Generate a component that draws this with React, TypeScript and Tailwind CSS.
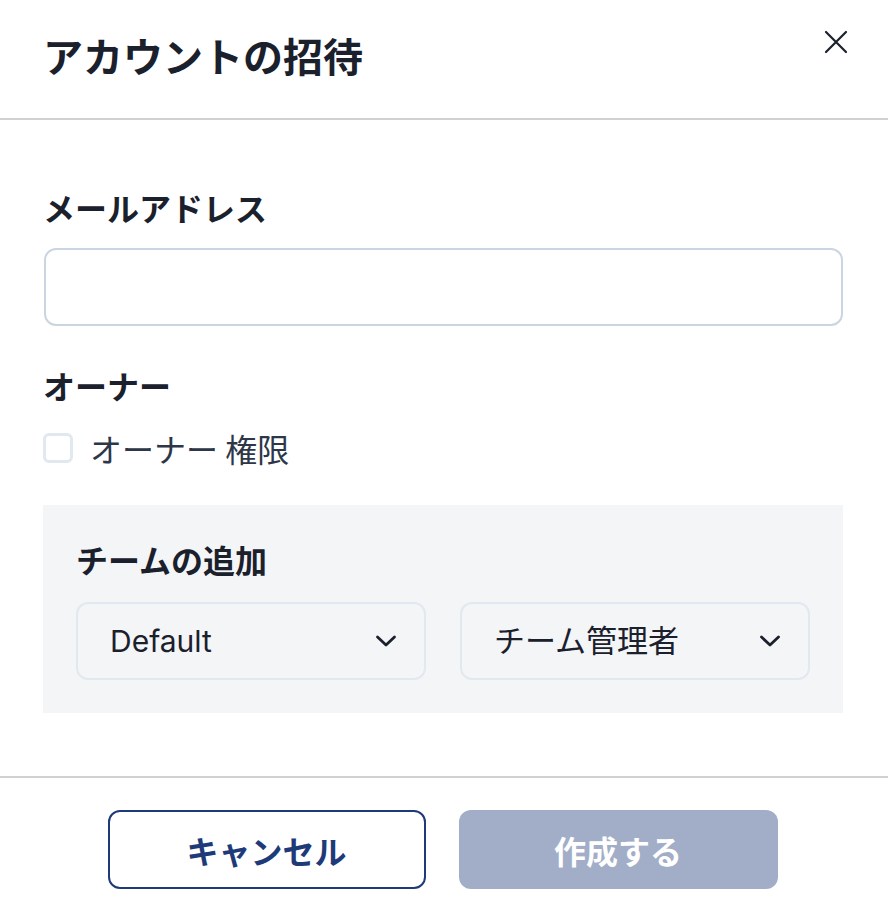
import React from "react";

const font = { fontFamily: '"Noto Sans CJK JP", "Noto Sans", sans-serif' };

function Chevron() {
  return (
    <svg width="24" height="24" viewBox="0 0 24 24" fill="none" stroke="#1a202c" strokeWidth="2.8" strokeLinecap="round" strokeLinejoin="round">
      <path d="M3.5 8l8.5 8 8.5-8" />
    </svg>
  );
}

function Select({ label, size }: { label: string; size: string }) {
  return (
    <div className="flex h-[78px] flex-1 items-center justify-between rounded-[12px] border-2 border-[#e2e8f0] pl-[32px] pr-[26px]">
      <span className={`${size} text-[#1a202c]`} style={{ fontFamily: '"Inter", "Noto Sans CJK JP", sans-serif' }}>{label}</span>
      <Chevron />
    </div>
  );
}

export default function App() {
  return (
    <div className="flex h-[914px] w-[888px] flex-col bg-white text-[#1a202c]" style={font}>
      <div className="flex h-[120px] shrink-0 items-start justify-between border-b-2 border-[#d0d0d0] pl-[43px] pr-[40px]">
        <h1 className="mt-[29px] text-[40px] font-bold leading-[52px]">アカウントの招待</h1>
        <svg className="mt-[30px]" width="24" height="24" viewBox="0 0 24 24" fill="none" stroke="#1a202c" strokeWidth="2.2" strokeLinecap="round">
          <path d="M2 2L22 22M22 2L2 22" />
        </svg>
      </div>
      <div className="flex flex-1 flex-col pl-[43px] pr-[45px] pt-[63px]">
        <label className="text-[32px] font-bold leading-[48px]">メールアドレス</label>
        <div className="mt-[17px] ml-px h-[78px] rounded-[12px] border-2 border-[#cbd5e1]" />
        <div className="mt-[35px] text-[32px] font-bold leading-[48px]">オーナー</div>
        <div className="mt-[15px] flex h-[48px] items-center gap-[17px]">
          <div className="h-[30px] w-[30px] rounded-[6px] border-[3px] border-[#e2e8f0]" />
          <span className="text-[32px] text-[#2d3748]">オーナー 権限</span>
        </div>
        <div className="mt-[33px] bg-[#f4f5f7] px-[33px] pb-[33px] pt-[30px]">
          <div className="text-[32px] font-bold leading-[48px]">チームの追加</div>
          <div className="mt-[19px] flex gap-[34px]">
            <Select label="Default" size="text-[30px]" />
            <Select label="チーム管理者" size="text-[31px]" />
          </div>
        </div>
      </div>
      <div className="flex h-[138px] shrink-0 justify-center gap-[33px] border-t-2 border-[#d0d0d0] pr-[3px] pt-[32px]">
        <button className="flex h-[79px] w-[318px] items-center justify-center rounded-[12px] border-2 border-[#1e3a78] bg-white text-[32px] font-bold text-[#1e3a78]">
          キャンセル
        </button>
        <button className="flex h-[79px] w-[319px] items-center justify-center rounded-[12px] bg-[#a2aec8] text-[32px] font-bold text-white">
          作成する
        </button>
      </div>
    </div>
  );
}
